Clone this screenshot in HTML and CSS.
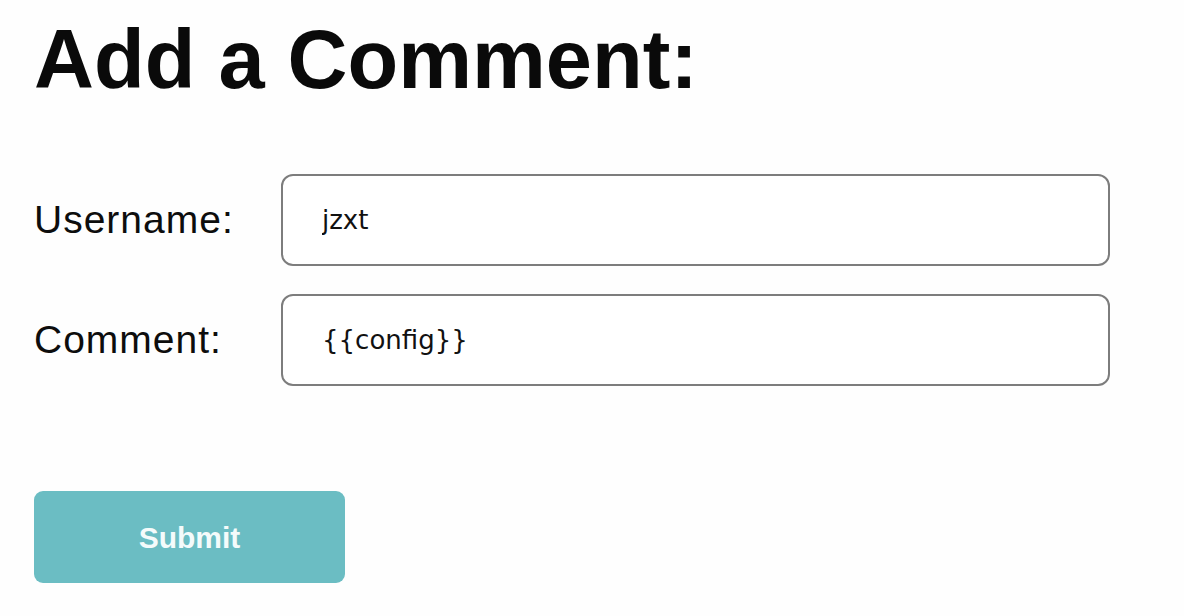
FILE: index.html
```html
<!DOCTYPE html>
<html>
<head>
<meta charset="utf-8">
<link rel="stylesheet" href="styles.css">
</head>
<body>
<div class="page">
  <h1 class="title">Add a Comment:</h1>
  <form class="form">
    <div class="row">
      <label class="label">Username:</label>
      <input class="field" type="text" value="jzxt">
    </div>
    <div class="row">
      <label class="label">Comment:</label>
      <input class="field" type="text" value="{{config}}">
    </div>
    <button class="submit" type="button">Submit</button>
  </form>
</div>
</body>
</html>
```
FILE: styles.css
```css
html, body {
  margin: 0;
  background: #fefefe;
}
.page {
  padding: 18px 34px 0 34px;
  font-family: "Liberation Sans", Arial, sans-serif;
  color: #111;
}
.title {
  margin: 0;
  font-size: 83px;
  line-height: 83px;
  font-weight: bold;
  color: #0a0a0a;
}
.form {
  display: flex;
  flex-direction: column;
  margin-top: 73px;
  gap: 28px;
}
.row {
  display: flex;
  align-items: center;
}
.label {
  width: 247px;
  font-size: 39px;
  letter-spacing: 1px;
  color: #0d0d0d;
}
.field {
  box-sizing: border-box;
  width: 829px;
  height: 92px;
  margin: 0;
  border: 2px solid #7d7d7d;
  border-radius: 12px;
  padding: 0 0 1px 39px;
  font-family: "DejaVu Sans", sans-serif;
  font-size: 26px;
  color: #111;
  background: #fff;
  outline: none;
}
.submit {
  margin-top: 77px;
  width: 311px;
  height: 92px;
  border: none;
  border-radius: 9px;
  background: #6bbdc3;
  color: #f4fbfb;
  font-family: "Liberation Sans", Arial, sans-serif;
  font-weight: bold;
  font-size: 30px;
  padding: 2px 0 0 0;
  cursor: pointer;
}
```
